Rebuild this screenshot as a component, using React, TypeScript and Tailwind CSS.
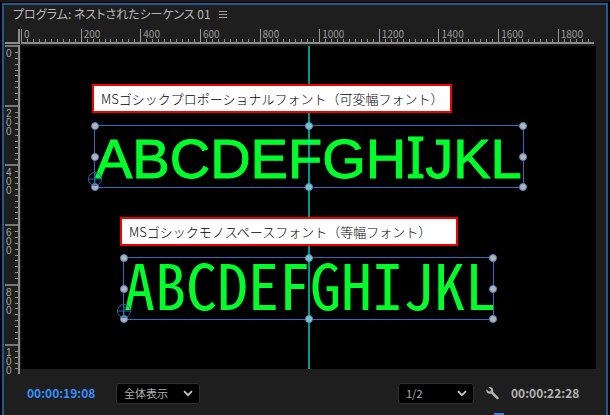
import { useState } from 'react'
import type { ReactNode } from 'react'

const H_MARKS = [0, 200, 400, 600, 800, 1000, 1200, 1400, 1600]
const V_MARKS = [0, 200, 400, 600, 800]
const TEN = Array.from({ length: 10 }, (_, i) => i)

function HorizontalRuler() {
  return (
    <div className="relative mr-[2px] flex h-[15px] border-b-2 border-[#8c8c8c] text-[10px] leading-[10px] text-[#9a9a9a]">
      {[...H_MARKS, 1800].map((mark) => (
        <div
          key={mark}
          className={`relative flex min-w-0 items-end border-l border-[#9a9a9a] ${mark === 1800 ? 'flex-[6_1_0%]' : 'flex-[10_1_0%]'}`}
        >
          <span className="absolute left-[2px] top-0">{mark}</span>
          {TEN.slice(0, mark === 1800 ? 6 : 10).map((n) => (
            <i key={n} className={`h-[3px] flex-1 ${n ? 'border-l border-[#8c8c8c]' : ''}`} />
          ))}
        </div>
      ))}
    </div>
  )
}

function VerticalRuler() {
  return (
    <div className="-mt-px -mb-[5px] mr-px flex flex-col border-r-2 border-[#8c8c8c] font-['Liberation_Sans',sans-serif] text-[10px] leading-[9px] text-[#a4a4a4]">
      {[...V_MARKS, 1000].map((mark) => (
        <div
          key={mark}
          className={`relative flex min-h-0 flex-col items-end border-t-2 border-[#777777] ${mark === 1000 ? 'flex-[5_1_0%]' : 'flex-[10_1_0%]'}`}
        >
          <span className="absolute left-px top-[2px] w-[6px] break-all">{String(mark).slice(0, 3)}</span>
          {TEN.slice(0, mark === 1000 ? 5 : 10).map((n) => (
            <i key={n} className={`w-[3px] flex-1 ${n ? 'border-t border-[#8c8c8c]' : ''}`} />
          ))}
        </div>
      ))}
    </div>
  )
}

const HANDLES = [
  'left-0 top-0',
  'left-1/2 top-0',
  'left-full top-0',
  'left-0 top-1/2',
  'left-full top-1/2',
  'left-0 top-full',
  'left-1/2 top-full',
  'left-full top-full',
]

function TextLayer({ className, children }: { className: string; children: ReactNode }) {
  return (
    <div className={`absolute border border-[#2e6cc0] text-[#00ff2a] ${className}`}>
      {children}
      {HANDLES.map((pos) => (
        <span
          key={pos}
          className={`absolute size-[8px] -translate-x-1/2 -translate-y-1/2 rounded-full border border-[#4a86cc] bg-[#b4b4b4] ${pos}`}
        />
      ))}
      {/* anchor point */}
      <svg className="absolute -left-[8px] bottom-0 size-[16px]" viewBox="0 0 16 16" fill="none" stroke="#2a62ac">
        <circle cx="8" cy="8" r="6.5" />
        <path d="M1 8h14M8 1v14" />
      </svg>
    </div>
  )
}

function Caption({ className, children }: { className: string; children: ReactNode }) {
  return (
    <p
      className={`absolute flex h-[29px] items-center border-2 border-[#f00000] bg-white pl-[7px] text-[13px] font-light whitespace-nowrap text-black ${className}`}
    >
      {children}
    </p>
  )
}

function Dropdown({ label, options, className }: { label: string; options: string[]; className: string }) {
  const [value, setValue] = useState(options[0])
  return (
    <div className={`relative ${className}`}>
      <select
        aria-label={label}
        value={value}
        onChange={(e) => setValue(e.target.value)}
        className="h-[21px] w-full appearance-none rounded-[3px] border border-[#303030] bg-black pl-[7px] text-[11px] leading-[19px] text-[#b0b0b0]"
      >
        {options.map((o) => (
          <option key={o}>{o}</option>
        ))}
      </select>
      <svg className="pointer-events-none absolute right-[7px] top-[7px] h-[7px] w-[10px]" viewBox="0 0 10 7" fill="none" stroke="#c8c8c8" strokeWidth="1.8">
        <path d="M1 1.2l4 4 4-4" />
      </svg>
    </div>
  )
}

export default function App() {
  return (
    <div className="min-h-screen bg-[#1a1a1a] font-['Noto_Sans_CJK_JP',sans-serif]">
      <div className="h-[2px]" />
      <div className="border-t border-black bg-black px-[2px]">
        <main className="border-2 border-b-0 border-[#22578f] bg-[#1e1e1e] pr-[10px] pl-px">
          <header className="mb-[6px] flex h-[18px] items-center pl-[8px] text-[12px] text-[#b8b8b8]">
            <h1 className="[font-feature-settings:'palt']">プログラム: ネストされたシーケンス 01</h1>
            <button aria-label="パネルメニュー" className="ml-2 flex w-[8px] flex-col gap-[2px]">
              <i className="h-px bg-[#a0a0a0]" />
              <i className="h-px bg-[#a0a0a0]" />
              <i className="h-px bg-[#a0a0a0]" />
            </button>
          </header>

          <div className="grid grid-cols-[16px_1fr] grid-rows-[17px_auto]">
            <div className="mr-px h-[15px] border-r-2 border-b-2 border-[#8c8c8c]" />
            <HorizontalRuler />
            <VerticalRuler />

            <div className="relative aspect-video overflow-hidden bg-black">
              <TextLayer className="left-[73px] top-[79px] h-[63px] w-[430px]">
                <p className="font-['Liberation_Sans',sans-serif] text-[56px] leading-[60px] whitespace-nowrap [-webkit-text-stroke:1px_#00ff2a]">
                  ABCDEFGH<span className="font-['Noto_Sans',sans-serif]">I</span>JKL
                </p>
              </TextLayer>
              <TextLayer className="left-[102px] top-[211px] h-[63px] w-[371px]">
                <p className="font-['Noto_Sans_Mono_CJK_JP','Noto_Sans_CJK_JP',monospace] text-[62px] leading-[50px] whitespace-nowrap [font-feature-settings:'hwid']">
                  ABCDEFGHIJKL
                </p>
              </TextLayer>
              <div className="absolute inset-y-0 left-1/2 w-[2px] -translate-x-1/2 bg-[#00e5dc]/65" />
              <Caption className="left-[71px] top-[38px] w-[360px]">
                MSゴシックプロポーショナルフォント（可変幅フォント）
              </Caption>
              <Caption className="left-[99px] top-[171px] w-[338px]">
                MSゴシックモノスペースフォント（等幅フォント）
              </Caption>
            </div>
          </div>

          <footer className="mt-[13px] flex h-[22px] items-center pl-[22px] text-[12px] font-bold">
            <span className="w-[89px] text-[#3590ff]">00:00:19:08</span>
            <Dropdown label="ズームレベル" options={['全体表示', '50%', '100%']} className="w-[84px] font-normal" />
            <div className="ml-auto flex items-center">
              <Dropdown label="再生時の解像度" options={['1/2', '1/4', 'フル画質']} className="w-[76px] font-normal" />
              <button aria-label="設定" className="ml-3">
                <svg className="size-[13px]" viewBox="0 0 13 13" fill="#b4b4b4">
                  <path d="M2.6.3C4.8-.4 7 .9 7.2 3c.1.7 0 1.2-.2 1.8l5.4 5.4c.5.6.5 1.2 0 1.7-.6.6-1.2.6-1.8 0L5.2 6.6C3 7.5.4 6.1.3 3.6c0-.5 0-.8.2-1.2l2.4 2.2 1.7-.4.5-1.7z" />
                </svg>
              </button>
              <span className="ml-3 w-[85px] text-[#b4b4b4]">00:00:22:28</span>
            </div>
          </footer>

          <div className="mt-[8px] flex pl-[489px]">
            <i className="mt-px h-[4px] w-[10px] bg-[#3b82d8]" />
          </div>
        </main>
      </div>
    </div>
  )
}
